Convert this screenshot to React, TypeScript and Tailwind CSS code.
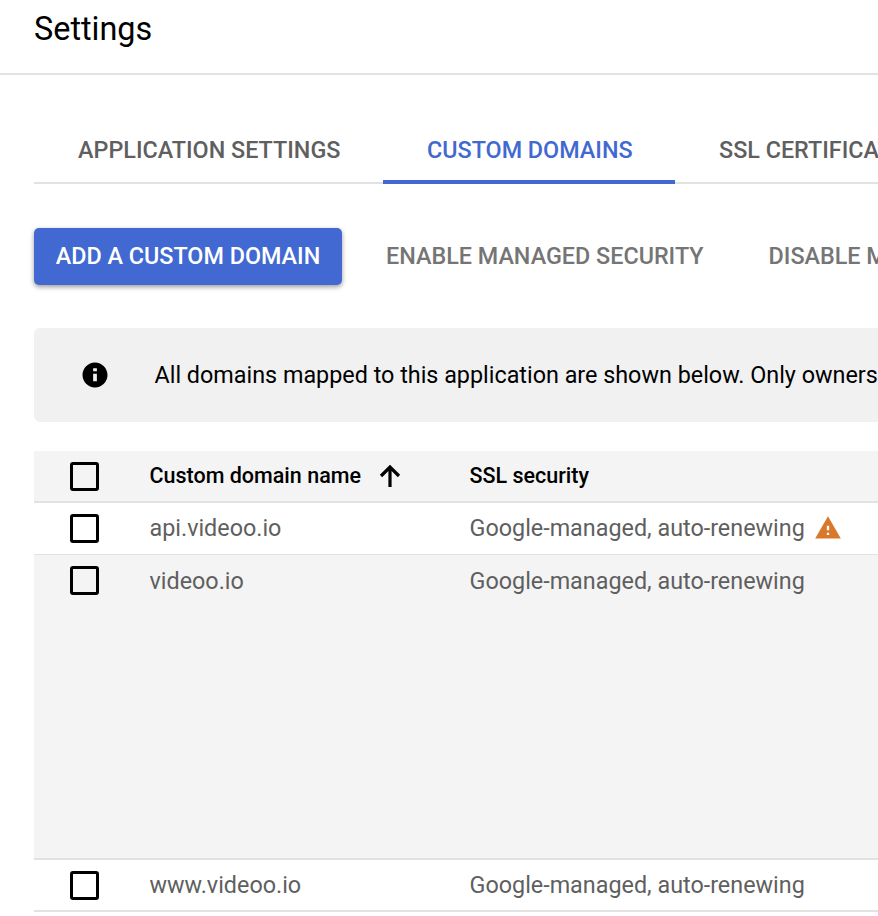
const Checkbox = () => (
  <div className="w-[29px] h-[29px] shrink-0 border-[3px] border-black rounded-[3px]" />
);

const Row = ({ name, bg, height, textTop, warn }: { name: string; bg: string; height: string; textTop: string; warn?: boolean }) => (
  <div className={`flex items-start shrink-0 ${bg} ${height}`}>
    <div className="w-[115.5px] pl-[36px] pt-[11px] shrink-0">
      <Checkbox />
    </div>
    <div className={`w-[320px] shrink-0 text-[23.35px] leading-[30px] text-[#5f5f5f] ${textTop}`}>{name}</div>
    <div className={`flex items-center shrink-0 text-[23.35px] leading-[30px] text-[#5f5f5f] ${textTop}`}>
      Google-managed, auto-renewing
      {warn && (
        <svg className="ml-[9px]" width="28" height="28" viewBox="0 0 24 24" fill="#d9772b">
          <path d="M1 21h22L12 2 1 21zm12-3h-2v-2h2v2zm0-4h-2v-4h2v4z" />
        </svg>
      )}
    </div>
  </div>
);

export default function App() {
  return (
    <div className="w-[878px] h-[916px] overflow-hidden bg-white font-['Roboto',sans-serif]">
      {/* Header */}
      <div className="h-[75px] border-b-2 border-[#e2e2e2] pl-[34px] pt-[8px]">
        <h1 className="text-[32.4px] leading-[42px] text-black">Settings</h1>
      </div>

      <div className="pl-[34px] w-[1400px]">
        {/* Tabs */}
        <div className="mt-[50px] flex h-[59px] border-b-2 border-[#e2e2e2] text-[23.35px] font-medium">
          <div className="w-[349px] pl-[44px] pt-[10px] leading-[30px] text-[#5f5f5f]">APPLICATION SETTINGS</div>
          <div className="w-[292px] h-[59px] pl-[44px] pt-[10px] leading-[30px] text-[#4169d1] border-b-4 border-[#4169d1]">CUSTOM DOMAINS</div>
          <div className="pl-[44px] pt-[10px] leading-[30px] text-[#5f5f5f]">SSL CERTIFICATES</div>
        </div>

        {/* Actions */}
        <div className="mt-[44px] flex items-center text-[23.35px] font-medium">
          <button className="h-[57px] w-[308px] rounded-[5px] bg-[#4169d1] text-white shadow-[0_2px_5px_rgba(0,0,0,0.4)]">
            ADD A CUSTOM DOMAIN
          </button>
          <span className="ml-[44px] text-[#757575]">ENABLE MANAGED SECURITY</span>
          <span className="ml-[65px] text-[#757575]">DISABLE MANAGED SECURITY</span>
        </div>

        {/* Info banner */}
        <div className="mt-[43px] h-[94px] rounded-[6px] bg-[#f1f1f1] flex items-center">
          <svg className="ml-[46px]" width="30" height="30" viewBox="0 0 24 24" fill="#000">
            <path
              fillRule="evenodd"
              d="M12 2C6.48 2 2 6.48 2 12s4.48 10 10 10 10-4.48 10-10S17.52 2 12 2zm1.5 15h-3v-6h3v6zm0-8h-3V6.5h3V9z"
            />
          </svg>
          <span className="ml-[44.5px] pt-[2px] text-[23.35px] text-black whitespace-nowrap">
            All domains mapped to this application are shown below. Only owners of a domain can map it.
          </span>
        </div>

        {/* Table */}
        <div className="mt-[29px] flex flex-col">
          <div className="flex items-center h-[52px] bg-[#f4f4f4] border-b-2 border-[#e2e2e2]">
            <div className="w-[115.5px] pl-[36px] shrink-0">
              <Checkbox />
            </div>
            <div className="w-[320px] shrink-0 flex items-center text-[21.5px] font-medium text-black">
              Custom domain name
              <svg className="ml-[18px]" width="22" height="24" viewBox="0 0 22 24" fill="none" stroke="#000" strokeWidth="3.2">
                <path d="M11 23V3M2 12l9-9 9 9" />
              </svg>
            </div>
            <div className="text-[21.5px] font-medium text-black">SSL security</div>
          </div>
          <Row name="api.videoo.io" bg="bg-white" height="h-[52px] border-b border-[#e2e2e2]" textTop="pt-[10px]" warn />
          <Row name="videoo.io" bg="bg-[#f4f4f4]" height="h-[305px] border-b-2 border-[#e2e2e2]" textTop="pt-[11px]" />
          <Row name="www.videoo.io" bg="bg-white" height="h-[52px] border-b-2 border-[#e2e2e2]" textTop="pt-[10px]" />
        </div>
      </div>
    </div>
  );
}
